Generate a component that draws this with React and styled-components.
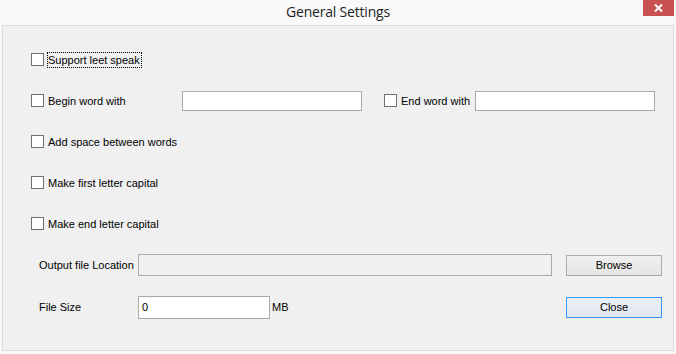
import React from 'react'
import styled, { createGlobalStyle } from 'styled-components'

const GlobalStyle = createGlobalStyle`
  html, body {
    margin: 0;
    padding: 0;
    background: #f9f9f9;
  }
  body {
    font-family: 'Liberation Sans', Arial, sans-serif;
    font-size: 11px;
    color: #000;
  }
`

const StyledWindow = styled.div`
  width: 676px;
  height: 354px;
  display: flex;
  flex-direction: column;
  background: #f9f9f9;
  box-sizing: border-box;
`

const StyledTitleBar = styled.div`
  height: 25px;
  position: relative;
  display: flex;
  align-items: center;
  justify-content: center;
`

const StyledTitle = styled.span`
  font-family: 'Open Sans', 'Liberation Sans', sans-serif;
  font-size: 14px;
  letter-spacing: -0.2px;
  color: #1e1e1e;
  margin-top: -2px;
`

const StyledCloseX = styled.div`
  position: absolute;
  top: 0;
  right: 2px;
  width: 31px;
  height: 16px;
  background: #c75050;
  display: flex;
  align-items: center;
  justify-content: center;
`

const StyledClient = styled.div`
  margin: 0 2px 3px 2px;
  flex: 1;
  border: 1px solid #dadada;
  background: #f0f0f0;
  padding: 13px 0 0 28px;
  display: flex;
  flex-direction: column;
`

const StyledRow = styled.div`
  height: ${props => props.height || '41px'};
  display: flex;
  align-items: center;
  white-space: nowrap;
`

const StyledOption = styled.label`
  display: flex;
  align-items: center;
  gap: 4px;
  width: ${props => props.width || 'auto'};
  margin-left: ${props => props.offset || '0'};
  flex-shrink: 0;
`

const StyledBox = styled.span`
  width: 13px;
  height: 13px;
  box-sizing: border-box;
  border: 1px solid #707070;
  background: #fff;
  flex-shrink: 0;
`

const StyledText = styled.span`
  line-height: 14px;
  outline: ${props => (props.focused ? '1px dotted #000' : 'none')};
  padding: 0 1px 0 0;
`

const StyledInput = styled.div`
  width: ${props => props.width};
  height: ${props => props.height || '20px'};
  box-sizing: border-box;
  border: 1px solid #a9a9a9;
  background: ${props => (props.disabled ? '#f0f0f0' : '#fff')};
  display: flex;
  align-items: center;
  padding-left: 3px;
  flex-shrink: 0;
`

const StyledLabel = styled.span`
  width: ${props => props.width || 'auto'};
  box-sizing: border-box;
  flex-shrink: 0;
  padding-left: ${props => props.pad || '0'};
`

const StyledButton = styled.div`
  width: 96px;
  height: ${props => props.height || '21px'};
  box-sizing: border-box;
  margin-left: ${props => props.offset || '0'};
  border: 1px solid ${props => (props.primary ? '#3399ff' : '#acacac')};
  background: ${props =>
    props.primary
      ? 'linear-gradient(#ecf0f6, #e1e7f0)'
      : 'linear-gradient(#f0f0f0, #e5e5e5)'};
  display: flex;
  align-items: center;
  justify-content: center;
  flex-shrink: 0;
`

const Option = ({ label, width, offset, focused }) => (
  <StyledOption width={width} offset={offset}>
    <StyledBox />
    <StyledText focused={focused}>{label}</StyledText>
  </StyledOption>
)

export default function App() {
  return (
    <>
      <GlobalStyle />
      <StyledWindow>
        <StyledTitleBar>
          <StyledTitle>General Settings</StyledTitle>
          <StyledCloseX>
            <svg width="9" height="8" viewBox="0 0 9 8">
              <path d="M1 0.5 L8 7.5 M8 0.5 L1 7.5" stroke="#fff" strokeWidth="2" />
            </svg>
          </StyledCloseX>
        </StyledTitleBar>
        <StyledClient>
          <StyledRow>
            <Option label="Support leet speak" focused />
          </StyledRow>
          <StyledRow>
            <Option label="Begin word with" width="151px" />
            <StyledInput width="180px" />
            <Option label="End word with" width="91px" offset="22px" />
            <StyledInput width="180px" />
          </StyledRow>
          <StyledRow>
            <Option label="Add space between words" />
          </StyledRow>
          <StyledRow>
            <Option label="Make first letter capital" />
          </StyledRow>
          <StyledRow>
            <Option label="Make end letter capital" />
          </StyledRow>
          <StyledRow height="42px">
            <StyledLabel width="107px" pad="8px">Output file Location</StyledLabel>
            <StyledInput width="414px" height="22px" disabled />
            <StyledButton offset="14px">Browse</StyledButton>
          </StyledRow>
          <StyledRow height="42px">
            <StyledLabel width="107px" pad="8px">File Size</StyledLabel>
            <StyledInput width="132px" height="23px">0</StyledInput>
            <StyledLabel width="296px" pad="2px">MB</StyledLabel>
            <StyledButton primary>Close</StyledButton>
          </StyledRow>
        </StyledClient>
      </StyledWindow>
    </>
  )
}
